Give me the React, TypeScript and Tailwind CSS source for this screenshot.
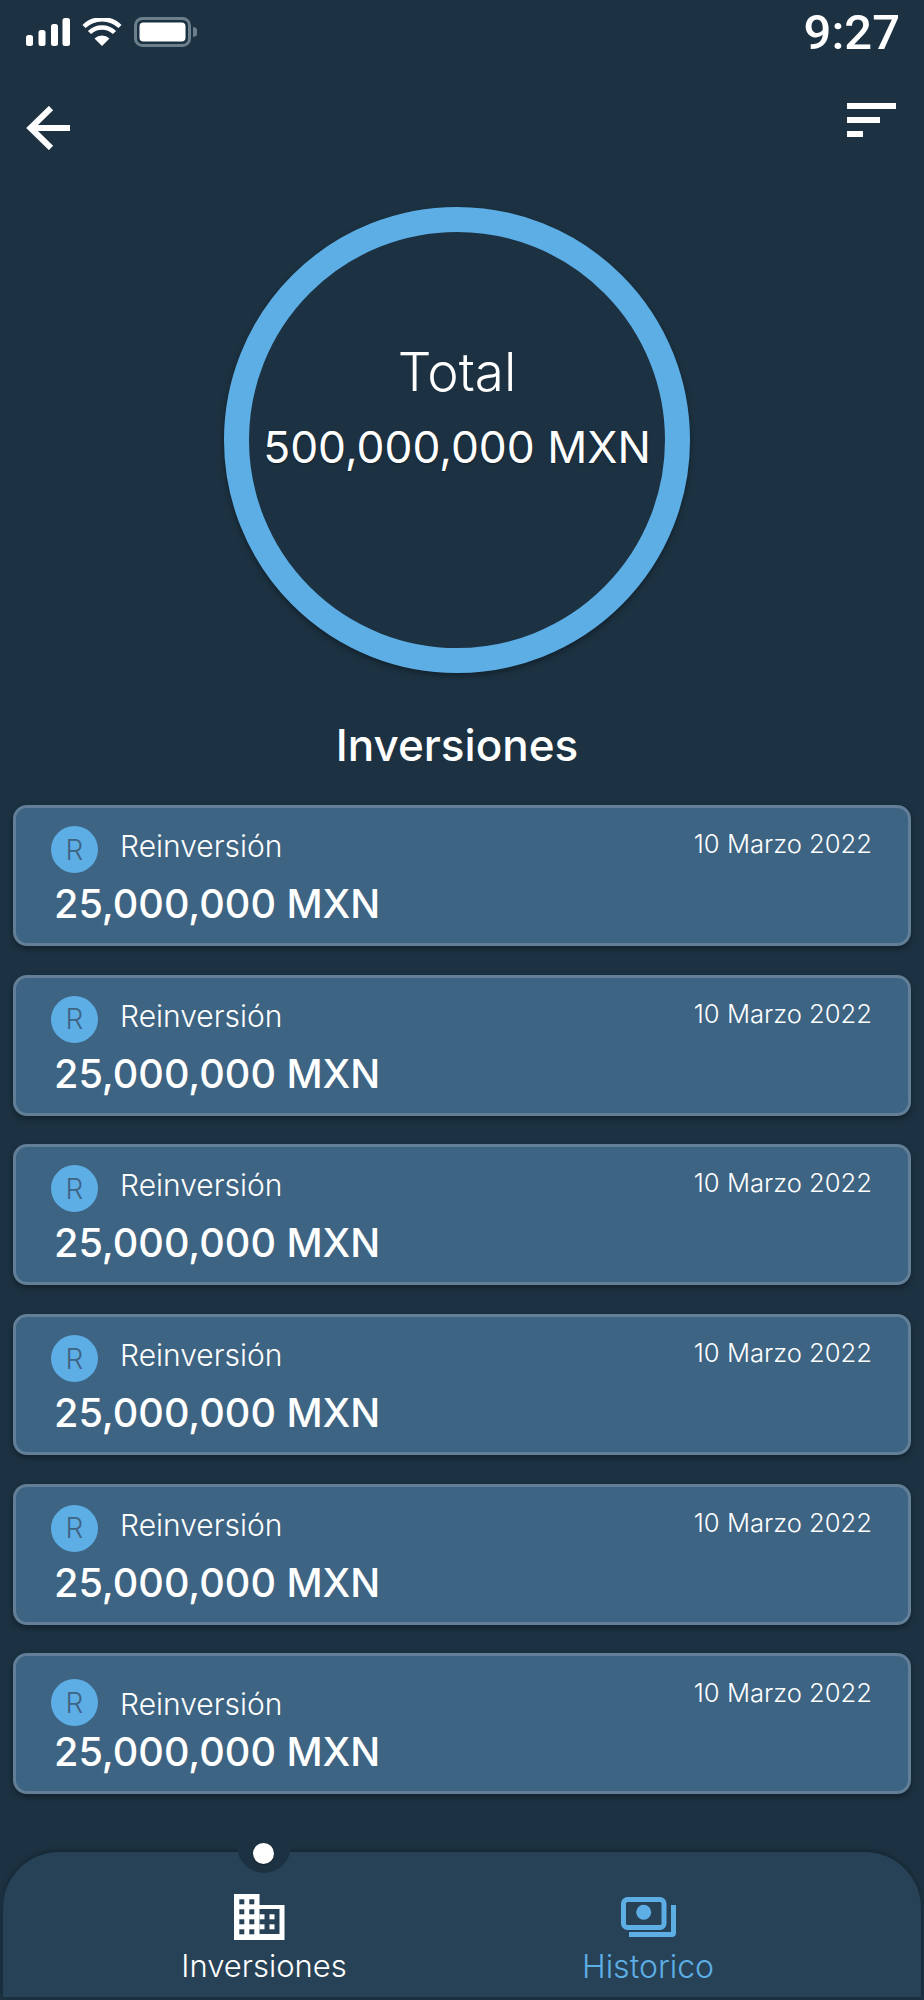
const light = "font-['Inter','Liberation_Sans',sans-serif] font-light";
const regular = "font-['Inter','Liberation_Sans',sans-serif] font-normal";
const medium = "font-['Inter','Liberation_Sans',sans-serif] font-medium";

function Signal() {
  return (
    <svg width="44" height="28" viewBox="0 0 44 28" fill="#fff">
      <rect x="0" y="17" width="7" height="11" rx="2.5" />
      <rect x="12.5" y="12" width="7" height="16" rx="2.5" />
      <rect x="25" y="6" width="7" height="22" rx="2.5" />
      <rect x="36.5" y="0" width="7.5" height="28" rx="2.5" />
    </svg>
  );
}

function Wifi() {
  return (
    <svg width="40" height="28" viewBox="0 0 40 28" fill="none">
      <path d="M20 28 L12.5 20.5 A11 11 0 0 1 27.5 20.5 Z" fill="#fff" />
      <path d="M7.5 14.5 A18 18 0 0 1 32.5 14.5" stroke="#fff" strokeWidth="4.5" />
      <path d="M2 8.5 A26 26 0 0 1 38 8.5" stroke="#fff" strokeWidth="4.5" />
    </svg>
  );
}

function Battery() {
  return (
    <svg width="63" height="30" viewBox="0 0 63 30" fill="none">
      <rect x="1.5" y="1.5" width="54" height="27" rx="7" stroke="#6b7f8d" strokeWidth="3" />
      <rect x="5.5" y="5.5" width="46" height="19" rx="4" fill="#fff" />
      <path d="M59 10 A5 5 0 0 1 59 20 Z" fill="#6b7f8d" />
    </svg>
  );
}

function Back() {
  return (
    <svg width="46" height="44" viewBox="0 0 46 44" fill="none" stroke="#fff" strokeWidth="6">
      <path d="M25 2 L4.5 22 L25 42" />
      <path d="M5 22 H44" />
    </svg>
  );
}

function FilterIcon() {
  return (
    <svg width="49" height="34" viewBox="0 0 49 34" fill="#fff">
      <rect x="0" y="0" width="49" height="6" />
      <rect x="0" y="14" width="33" height="6" />
      <rect x="0" y="28" width="16" height="6" />
    </svg>
  );
}

function Building() {
  const dark = "#274257";
  return (
    <svg width="51" height="46" viewBox="0 0 51 46">
      <rect x="0" y="0" width="25.5" height="46" fill="#fff" />
      <rect x="25" y="11" width="25.5" height="35" fill="#fff" />
      {[5.3, 15.3, 25.3, 35.3].map((y) =>
        [5.3, 15.3].map((x) => <rect key={`${x}-${y}`} x={x} y={y} width="5" height="5" fill={dark} />),
      )}
      <rect x="25.5" y="15" width="20" height="25" fill={dark} />
      {[20.3, 30.3].map((y) =>
        [25.5, 35.5].map((x) => <rect key={`${x}-${y}`} x={x} y={y} width="5" height="5" fill="#fff" />),
      )}
    </svg>
  );
}

function Money() {
  return (
    <svg width="55" height="40" viewBox="0 0 55 40" fill="none">
      <rect x="2.5" y="2.5" width="40.5" height="28" rx="4" stroke="#5eaee6" strokeWidth="5" />
      <circle cx="22.7" cy="15.3" r="7.5" fill="#5eaee6" />
      <path d="M8 37.5 H51 Q52.5 37.5 52.5 36 V8" stroke="#5eaee6" strokeWidth="5" />
    </svg>
  );
}

function Card({ last }: { last?: boolean }) {
  return (
    <div className="h-[141px] rounded-[14px] border-[3px] border-[#627f97] bg-[#3e6483] shadow-[0_3px_6px_rgba(0,0,0,0.35)] pl-[35px] pr-[36px] pt-[18px]">
      <div className="flex h-[47px] items-start">
        <div className={`flex h-[47px] w-[47px] shrink-0 items-center justify-center rounded-full bg-[#5eaee6] text-[28px] leading-none text-[#3e6483] ${light} ${last ? "mt-[5px]" : ""}`}>
          R
        </div>
        <span className={`ml-[22px] text-[30px] leading-[36px] text-white ${light} ${last ? "mt-[12px]" : "mt-[2px]"}`}>Reinversión</span>
        <span className={`ml-auto text-[25.6px] leading-[36px] text-white ${light} ${last ? "mt-[1px]" : "mt-0"}`}>10 Marzo 2022</span>
      </div>
      <div className="ml-[3px] mt-[7px] text-[39.6px] leading-[48px] text-white font-['Inter','Liberation_Sans',sans-serif] font-medium">
        25,000,000 MXN
      </div>
    </div>
  );
}

export default function App() {
  return (
    <div className="relative flex h-[2000px] w-[924px] flex-col overflow-hidden bg-[#1c3242]">
      <div className="flex h-[64px] items-center justify-between pl-[26px] pr-[24px]">
        <div className="flex items-center">
          <Signal />
          <div className="ml-[12px]"><Wifi /></div>
          <div className="ml-[12px]"><Battery /></div>
        </div>
        <span className="font-['Roboto',sans-serif] text-[49px] font-medium leading-none text-white">9:27</span>
      </div>

      <div className="flex h-[143px] items-start justify-between pl-[26px] pr-[28px] pt-[39px]">
        <div className="mt-[3px]"><Back /></div>
        <FilterIcon />
      </div>

      <div className="ml-[224px] flex h-[466px] w-[466px] flex-col items-center rounded-full border-[25px] border-[#5eaee6] pt-[110px] shadow-[0_3px_6px_rgba(0,0,0,0.35)]">
        <div className={`text-[53px] leading-[60px] text-white ${light}`}>Total</div>
        <div className={`mt-[17px] whitespace-nowrap text-[44.3px] leading-[56px] text-white [text-shadow:0_1px_2px_rgba(0,0,0,0.4)] ${regular}`}>500,000,000 MXN</div>
      </div>

      <div className={`mt-[42px] h-[60px] pr-[10px] text-center text-[44px] leading-[60px] text-white ${medium}`}>Inversiones</div>

      <div className="mt-[30px] flex flex-col gap-[28.7px] px-[13px]">
        <Card />
        <Card />
        <Card />
        <Card />
        <Card />
        <Card last />
      </div>

      <div className="relative mx-[3px] mt-[57.5px] flex h-[145px] rounded-[56px_56px_0_0] bg-[#274257] shadow-[0_-2px_5px_rgba(0,0,0,0.25),0_3px_0_#1c3242]">
        <div className="absolute left-[234px] -top-[33px] h-[54px] w-[54px] rounded-full bg-[#1c3242]" />
        <div className="absolute left-[250px] -top-[9px] h-[21px] w-[21px] rounded-full bg-white shadow-[0_1px_1px_rgba(0,0,0,0.4)]" />
        <div className="flex w-[522px] flex-col items-center pt-[42px]">
          <div className="mr-[9px]"><Building /></div>
          <span className={`mt-[6px] text-[31px] leading-[40px] text-white ${light}`}>Inversiones</span>
        </div>
        <div className="flex w-[246px] flex-col items-center pt-[45px]">
          <Money />
          <span className={`mt-[10px] text-[32px] leading-[40px] text-[#5eaee6] ${light}`}>Historico</span>
        </div>
      </div>
    </div>
  );
}
